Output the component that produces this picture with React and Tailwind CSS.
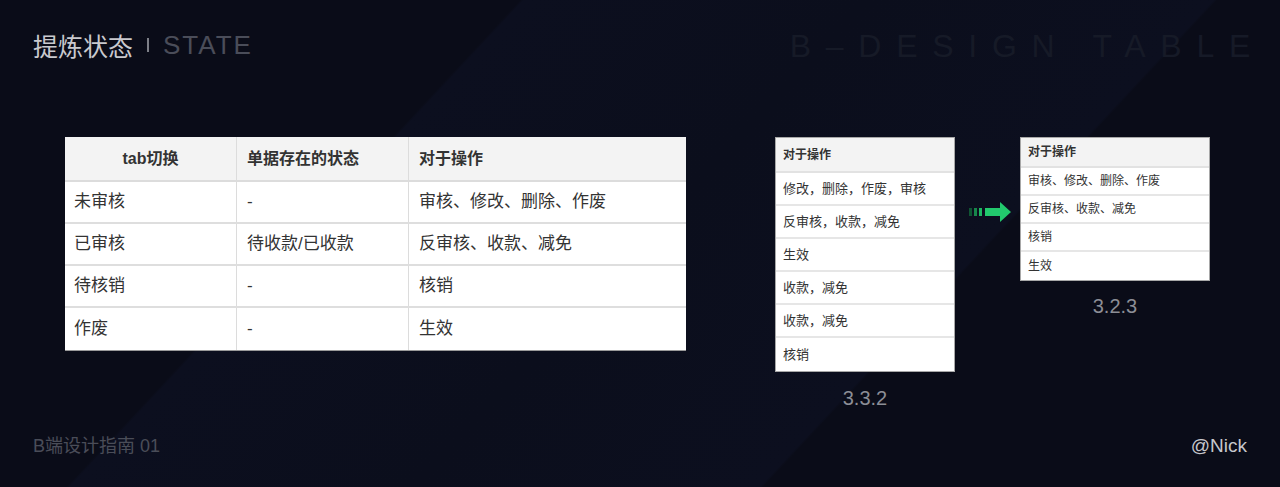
const font = "font-['Liberation_Sans','Noto_Sans_CJK_SC',sans-serif]";

const mainRows = [
  ['未审核', '-', '审核、修改、删除、作废'],
  ['已审核', '待收款/已收款', '反审核、收款、减免'],
  ['待核销', '-', '核销'],
  ['作废', '-', '生效'],
];

const oldActions = ['修改，删除，作废，审核', '反审核，收款，减免', '生效', '收款，减免', '收款，减免', '核销'];
const newActions = ['审核、修改、删除、作废', '反审核、收款、减免', '核销', '生效'];

function StateTable() {
  return (
    <div className="w-[621px] bg-white border-b border-[#9a9a9a] text-[17px] text-[#333]">
      <div className="grid grid-cols-[172px_172px_277px] h-[45px] bg-[#f3f3f3] border-b-2 border-[#dcdcdc] font-bold text-[16px]">
        <div className="flex items-center justify-center border-r border-[#dcdcdc]">tab切换</div>
        <div className="flex items-center px-[10px] border-r border-[#dcdcdc]">单据存在的状态</div>
        <div className="flex items-center px-[10px]">对于操作</div>
      </div>
      {mainRows.map((row, i) => (
        <div
          key={i}
          className={`grid grid-cols-[172px_172px_277px] h-[42px] ${i < mainRows.length - 1 ? 'border-b-2 border-[#dedede]' : ''}`}
        >
          <div className="flex items-center px-[9px] border-r border-[#dcdcdc]">{row[0]}</div>
          <div className="flex items-center px-[10px] border-r border-[#dcdcdc]">{row[1]}</div>
          <div className="flex items-center px-[10px]">{row[2]}</div>
        </div>
      ))}
    </div>
  );
}

function ActionList({ items, width, head, row, text, caption, captionGap }) {
  return (
    <div className="flex flex-col items-center">
      <div className={`${width} bg-white border border-[#a8a8a8] text-[#333]`}>
        <div className={`${head} flex items-center px-[7px] bg-[#f3f3f3] border-b-2 border-[#e2e2e2] text-[12px] font-bold`}>
          对于操作
        </div>
        {items.map((t, i) => (
          <div
            key={i}
            className={`${row} ${text} flex items-center px-[7px] ${i < items.length - 1 ? 'border-b-2 border-[#e6e6e6]' : ''}`}
          >
            {t}
          </div>
        ))}
      </div>
      <div className={`${captionGap} text-[20px] leading-[22px] text-[#8c8e96]`}>{caption}</div>
    </div>
  );
}

function Arrow() {
  return (
    <svg width="44" height="22" viewBox="0 0 44 22" className="shrink-0">
      <rect x="1" y="7" width="3" height="8" fill="#0f5533" />
      <rect x="6" y="7" width="3" height="8" fill="#17874b" />
      <rect x="11" y="7" width="3" height="8" fill="#1eb862" />
      <polygon points="17,7 32,7 32,1 43,11 32,21 32,15 17,15" fill="#22c96d" />
    </svg>
  );
}

export default function App() {
  return (
    <div
      className={`${font} w-[1280px] h-[487px] overflow-hidden flex flex-col bg-[linear-gradient(133deg,#0a0c18_0%,#0a0c18_30%,#0c0f1f_30.2%,#0b0e1c_50%,#0c0f1f_70%,#0a0c18_70.2%,#0a0c18_100%)]`}
    >
      {/* Header */}
      <div className="flex items-center justify-between h-[30px] mt-[30px] pl-[33px] pr-[15px]">
        <div className="flex items-center">
          <span className="text-[25px] leading-[30px] text-[#c9c9ce] font-['Noto_Sans_CJK_SC',sans-serif]">提炼状态</span>
          <span className="w-[2px] h-[14px] bg-[#7d7f87] ml-[14px] mr-[14px]" />
          <span className="text-[26px] leading-[30px] tracking-[2px] font-light text-[#4a4d59]">STATE</span>
        </div>
        <span className="text-[32px] leading-[30px] mt-[2px] tracking-[0.46em] text-[#161a27]">B–DESIGN TABLE</span>
      </div>

      {/* Tables */}
      <div className="flex items-start mt-[77px] pl-[65px]">
        <StateTable />
        <div className="ml-[89px]">
          <ActionList
            items={oldActions}
            width="w-[180px]"
            head="h-[35px]"
            row="h-[33px]"
            text="text-[13px]"
            caption="3.3.2"
            captionGap="mt-[15px]"
          />
        </div>
        <div className="mt-[64px] ml-[13px] mr-[8px]">
          <Arrow />
        </div>
        <ActionList
          items={newActions}
          width="w-[190px]"
          head="h-[30px]"
          row="h-[28px]"
          text="text-[12px]"
          caption="3.2.3"
          captionGap="mt-[14px]"
        />
      </div>

      {/* Footer */}
      <div className="mt-auto mb-[30px] flex items-center justify-between pl-[33px] pr-[33px] text-[19px] leading-[22px]">
        <span className="text-[#4a4d58] text-[18px]">B端设计指南 01</span>
        <span className="text-[#c6c7cc]">@Nick</span>
      </div>
    </div>
  );
}
